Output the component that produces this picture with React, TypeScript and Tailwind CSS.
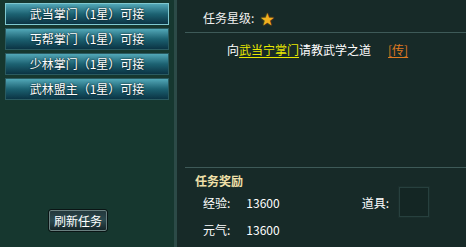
import React from "react";

const quests = [
  { name: "武当掌门", active: true },
  { name: "丐帮掌门", active: false },
  { name: "少林掌门", active: false },
  { name: "武林盟主", active: false },
];

const font = { fontFamily: '"Noto Sans CJK SC", "Noto Sans", sans-serif' };

export default function App() {
  return (
    <div
      className="flex h-[247px] w-[466px] overflow-hidden bg-[#172a28] text-[12px] leading-none text-white"
      style={font}
    >
      {/* quest list */}
      <div className="flex w-[174px] flex-col bg-[#16372f] pt-[3px]">
        <div className="flex flex-col gap-[3px] px-[5px]">
          {quests.map((q) => (
            <div
              key={q.name}
              className={`flex h-[22px] items-center justify-center border bg-gradient-to-b from-[#52a8b8] via-[#1c6272] to-[#0b3444] ${
                q.active ? "border-[#7fc8d0]" : "border-[#2a5a60]"
              }`}
            >
              <span className="text-white [text-shadow:0_0_2px_#000]">{q.name}（1星）可接</span>
            </div>
          ))}
        </div>
        <div className="mt-auto mb-[16px] flex justify-center pr-[18px]">
          <button className="h-[21px] w-[58px] rounded-[2px] border border-[#6a8080] bg-gradient-to-b from-[#23383c] via-[#2c4a50] to-[#152528] text-[12px] text-white outline outline-1 outline-[#0a1515]">
            刷新任务
          </button>
        </div>
      </div>

      {/* divider */}
      <div className="w-[3px] bg-[#2c4a47]" />

      {/* detail */}
      <div className="flex flex-1 flex-col pl-[8px]">
        <div className="flex h-[32px] items-center gap-[6px] pl-[18px] pt-[3px]">
          <span className="text-[#f0f0f0]">任务星级:</span>
          <span className="text-[14px] text-[#f0b020] [text-shadow:0_0_2px_#a06000]">★</span>
        </div>
        <div className="h-px bg-[#3e5a58]" />
        <div className="flex items-center pl-[42px] pt-[11px]">
          <span>向</span>
          <span className="text-[#e8e800] underline underline-offset-2">武当宁掌门</span>
          <span>请教武学之道</span>
          <span className="ml-[17px] text-[#e07a20] underline underline-offset-2">[传]</span>
        </div>

        <div className="mt-auto h-px bg-[#3e5a58]" />
        <div className="flex flex-col pb-[11px]">
          <div className="pl-[10px] pt-[7px] font-bold text-[#f0e0a8]">任务奖励</div>
          <div className="flex">
            <div className="flex flex-col gap-[15px] pl-[18px] pt-[10px]">
              <div className="flex gap-[16px]">
                <span>经验:</span>
                <span>13600</span>
              </div>
              <div className="flex gap-[16px]">
                <span>元气:</span>
                <span>13600</span>
              </div>
            </div>
            <div className="ml-[82px] flex items-start gap-[10px]">
              <span className="pt-[10px]">道具:</span>
              <div className="h-[30px] w-[30px] border border-[#27403e] bg-[#142624] shadow-[0_0_0_1px_#1a2e2c]" />
            </div>
          </div>
        </div>
      </div>
    </div>
  );
}
